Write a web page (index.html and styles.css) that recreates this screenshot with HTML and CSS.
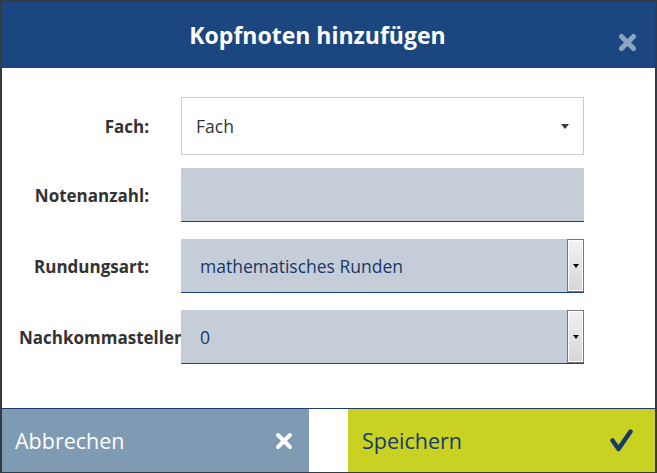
FILE: index.html
```html
<!DOCTYPE html>
<html lang="de">
<head>
    <meta charset="UTF-8">
    <title>Kopfnoten hinzufügen</title>
    <link rel="stylesheet" href="styles.css">
</head>
<body>
    <div class="modal">
        <div class="modal-header">
            <h1 class="modal-title">Kopfnoten hinzufügen</h1>
            <button class="modal-close" type="button" aria-label="Schließen">
                <svg width="19" height="19" viewBox="0 0 19 19"><path d="M3.5 3.5 L15.5 15.5 M15.5 3.5 L3.5 15.5" stroke="#8ba3c4" stroke-width="5" stroke-linecap="round"/></svg>
            </button>
        </div>

        <form class="modal-body">
            <div class="form-row">
                <label class="form-label">Fach:</label>
                <div class="field field-plain">
                    <span class="field-value">Fach</span>
                    <span class="caret"></span>
                </div>
            </div>
            <div class="form-row">
                <label class="form-label">Notenanzahl:</label>
                <div class="field field-filled"></div>
            </div>
            <div class="form-row">
                <label class="form-label">Rundungsart:</label>
                <div class="field field-filled">
                    <span class="field-value">mathematisches Runden</span>
                    <span class="spin"><span class="spin-arrow"></span></span>
                </div>
            </div>
            <div class="form-row">
                <label class="form-label">Nachkommastellen:</label>
                <div class="field field-filled">
                    <span class="field-value">0</span>
                    <span class="spin"><span class="spin-arrow"></span></span>
                </div>
            </div>
        </form>

        <div class="modal-footer">
            <button class="btn btn-cancel" type="button">
                Abbrechen
                <svg width="18" height="18" viewBox="0 0 18 18"><path d="M3 3 L15 15 M15 3 L3 15" stroke="#fff" stroke-width="4" stroke-linecap="round"/></svg>
            </button>
            <button class="btn btn-save" type="button">
                Speichern
                <svg width="23" height="23" viewBox="0 0 23 23"><path d="M2.5 11.5 L8.5 20 L20.5 2.5" fill="none" stroke="#173a6a" stroke-width="4.5" stroke-linecap="round" stroke-linejoin="round"/></svg>
            </button>
        </div>
    </div>
</body>
</html>
```

FILE: styles.css
```css
body {
    margin: 0;
    padding: 2px 2px 1px 2px;
    background: #343b45;
    font-family: 'Open Sans', 'Noto Sans', sans-serif;
}

.modal {
    position: relative;
    width: 653px;
    background: #fff;
}

.modal-header {
    height: 66px;
    display: flex;
    align-items: center;
    background-color: #1b467f;
}

.modal-title {
    flex: 1;
    margin: 0;
    padding-right: 22px;
    text-align: center;
    color: #fff;
    font-size: 23px;
    font-weight: 700;
}

.modal-close {
    position: absolute;
    top: 31px;
    right: 18px;
    width: 19px;
    height: 19px;
    padding: 0;
    border: none;
    background: none;
    cursor: pointer;
}

.modal-close svg {
    display: block;
}

.modal-body {
    padding: 29px 0 44px 17px;
}

.form-row {
    display: grid;
    grid-template-columns: 130px 403px;
    column-gap: 32px;
    align-items: center;
    margin-bottom: 17px;
}

.form-row:first-child {
    margin-bottom: 13px;
}

.form-row:last-child {
    margin-bottom: 0;
}

.form-label {
    text-align: right;
    white-space: nowrap;
    color: #333;
    font-size: 17px;
    font-weight: 700;
}

.field {
    display: flex;
    align-items: center;
    box-sizing: border-box;
    height: 54px;
    font-size: 17.5px;
}

.field-plain {
    height: 58px;
    padding-left: 14px;
    border: 1px solid #ccc;
    color: #333;
}

.field-filled {
    padding-left: 19px;
    background-color: #c5ced8;
    border-bottom: 1px solid #1b467f;
    color: #173767;
}

.field-value {
    flex: 1;
}

.caret {
    margin-right: 14px;
    border-style: solid;
    border-width: 5px 4px 0 4px;
    border-color: #3a3a3a transparent transparent transparent;
}

.spin {
    align-self: stretch;
    display: flex;
    align-items: center;
    justify-content: center;
    width: 17px;
    box-sizing: border-box;
    border: 1px solid #777;
    box-shadow: inset 0 0 0 1px #fff;
    background: linear-gradient(#f2f2f2, #d6d6d6);
}

.spin-arrow {
    border-style: solid;
    border-width: 4px 3.5px 0 3.5px;
    border-color: #000 transparent transparent transparent;
}

.modal-footer {
    display: flex;
    gap: 39px;
    border-top: 1px solid #1b3a6b;
}

.btn {
    flex: none;
    width: 307px;
    height: 63px;
    box-sizing: border-box;
    display: flex;
    align-items: center;
    justify-content: space-between;
    border: none;
    font-family: 'Open Sans', 'Noto Sans', sans-serif;
    font-size: 21.5px;
    cursor: pointer;
}

.btn svg {
    display: block;
}

.btn-cancel {
    padding: 0 16px 0 13px;
    background-color: #7f9ab3;
    color: #fff;
}

.btn-save {
    padding: 0 22px 0 14px;
    background-color: #c9d122;
    color: #173a6a;
}
```
